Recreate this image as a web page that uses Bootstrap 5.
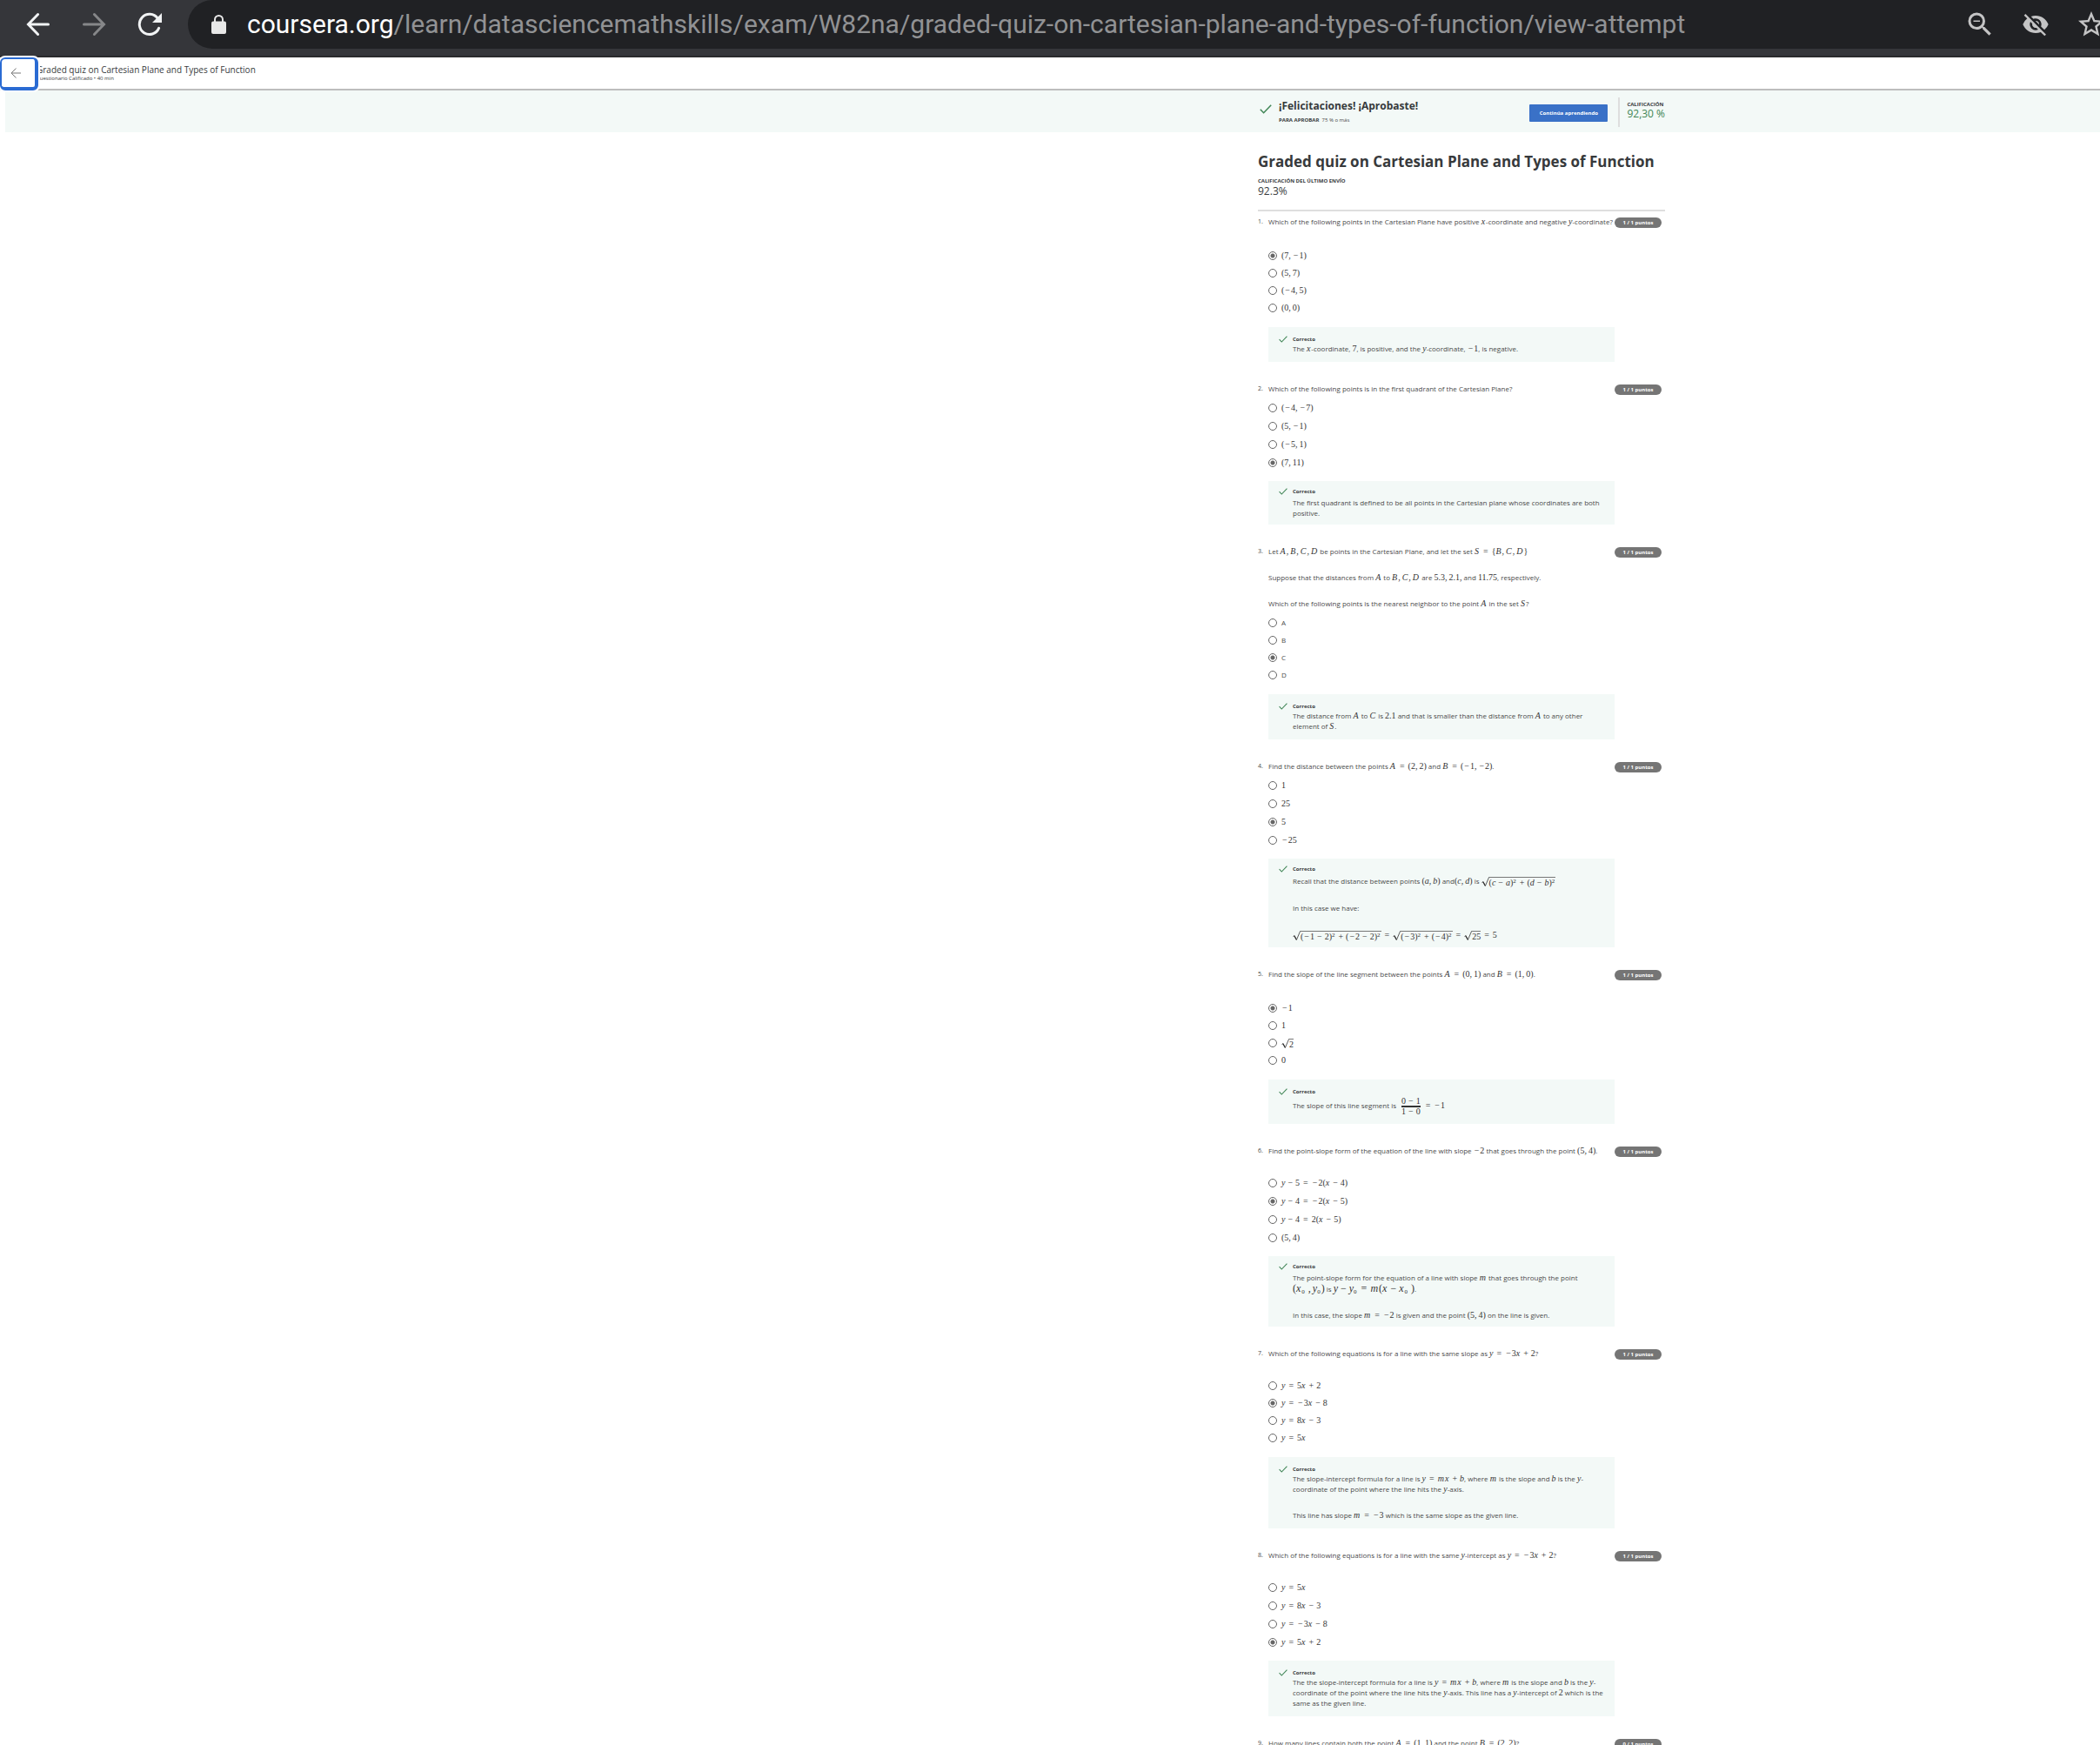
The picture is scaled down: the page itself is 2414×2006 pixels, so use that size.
<!DOCTYPE html>
<html lang="es">
<head>
<meta charset="utf-8">
<meta name="viewport" content="width=device-width, initial-scale=1">
<title>Graded quiz on Cartesian Plane and Types of Function</title>
<link href="https://cdn.jsdelivr.net/npm/bootstrap@5.3.0/dist/css/bootstrap.min.css" rel="stylesheet">
<style>
body{height:100vh;overflow:hidden;background:#fff;color:#4a4a4a;font:8px/12px "Open Sans",sans-serif}
p{margin:0}
p+p{margin-top:18px}
/* browser toolbar */
.toolbar{height:66px;background:#35363a;border-bottom:2px solid #292a2c;padding:0 0 8px 30px;gap:36px}
.toolbar button{width:28px;height:28px;color:#f1f3f4}
.toolbar button:disabled{color:#868789}
.toolbar button svg{display:block}
.omnibox{height:56px;margin-left:-6px;padding-left:27px;background:#202124;border-radius:28px 0 0 28px;color:#919294;font:30px/36px Roboto,sans-serif}
.omnibox .host{color:#fff}
.omnibox .lock{margin-right:24px}
.tools{gap:28px;margin-right:-8px;color:#c4c4c5}
.tools button{width:36px;height:36px;color:inherit}
/* page header */
.topbar{height:38px;padding:7px 0 0 42px;border-bottom:2px solid #bdbdbd;color:#373a3c}
.topbar h1{font-size:10px;line-height:14px;font-weight:400;margin:0}
.topbar small{font-size:6px;line-height:6px;display:block}
.back{left:0;top:0;width:44px;height:38px;background:#fff;border:solid #2a6bd3;border-width:2px 4px 4px 2px;border-radius:6px;box-shadow:0 0 0 2px #fff;color:#777;padding:0 0 0 10px;text-align:left}
.back svg{display:block}
.sheet{display:grid;grid-template-columns:72fr 468px 25fr;margin-left:6px}
.sheet>*{grid-column:2}
.tint{background:#f3f9f7}
.result{height:48px;padding:8px 0 0 2px;gap:8px}
.result h2{font-size:12px;line-height:16px;font-weight:700;color:#373a3c;margin:2px 0 3px}
.micro{font-size:6px;line-height:10px}
.micro b,.cap{font-weight:700;color:#373a3c}
.go{width:90px;height:20px;padding:0;border:0;border-radius:1px;background:#3a71c7;color:#fff;font-size:6px;line-height:20px;font-weight:700}
.score{height:34px;margin-left:4px;padding:3px 0 0 8px;border-left:2px solid #dedede}
.score strong{display:block;font-size:12px;line-height:12px;font-weight:400;color:#3f8555}
.quiz-title{font-size:17px;line-height:24px;font-weight:700;color:#373a3c;margin:22px 0 5px}
.grade{font-size:12px;line-height:14px;color:#373a3c}
.rule{height:2px;margin:14px 0 6px;background:#dedede}
/* questions */
.question{margin-bottom:25px}
.num{width:12px;font-size:7px}
.body-col{width:398px}
.puntos{width:54px;height:12px;margin-top:1px;border-radius:6px;background:#757575;color:#fff;font-size:6px;line-height:12px;font-weight:700;text-align:center}
.options{display:flex;flex-direction:column;gap:5px;margin:8px 0 13px}
.options.tight{gap:4px;margin-bottom:14px}
.options.mid{margin-top:23px}
.options.far{margin-top:25px}
.options .form-check{display:flex;align-items:center;height:16px;min-height:0;margin:0;padding:0;gap:5px}
.options .form-check-input{float:none;width:10px;height:10px;margin:0;border:1px solid #666;background:#fff none}
.options .form-check-input:checked{background:radial-gradient(circle,#666 0 2px,#fff 3px);border-color:#666}
.feedback{padding:9px 12px}
.feedback.snug{padding:7px 12px}
.feedback.snug .cap{margin-bottom:2px}
.feedback>svg{width:10px;height:8px;margin:1px 6px 0 0;flex:none}
.green{color:#3f8555}
.tall{line-height:14px}
.fracline{line-height:22px}
/* mathematics */
.tex{font-family:"Liberation Serif",serif;font-size:10px;line-height:1;white-space:nowrap;color:#333}
.tex i.wd{margin-right:1px}
.tex .rel{margin:0 4px}
.tex .bin{margin:0 3px}
.tex .neg{margin:0 1px}
.tex .pun{margin-right:2px}
.tex sup,.tex sub{font-size:7px;line-height:0;margin-right:1px}
.tex.big{font-size:12px}
.root{display:inline-flex;align-items:stretch;vertical-align:middle;height:11px}
.root svg{width:9px;height:11px;flex:none}
.root>.tex{border-top:1px solid #777;line-height:11px}
.frac{display:inline-flex;flex-direction:column;align-items:center;vertical-align:middle;margin:0 2px 0 4px;line-height:10px}
.frac .tex{line-height:10px}
.frac .tex+.tex{border-top:2px solid #333}
</style>
</head>
<body>
<svg class="d-none" aria-hidden="true">
  <symbol id="check" viewBox="0 0 14 11"><path d="M.8 5.8 4.6 9.7 13.2.8" fill="none" stroke="currentColor" stroke-width="1.5"/></symbol>
  <symbol id="surd" viewBox="0 0 9 11" preserveAspectRatio="none"><path d="M.5 6.6 2 5.6 4.4 10.4 8.6.5H9" fill="none" stroke="#333" stroke-width=".8"/><path d="M1.8 5.8 4.3 10.2" stroke="#333" stroke-width="1.2"/></symbol>
</svg>

<nav class="toolbar d-flex align-items-center" aria-label="Navegador">
  <button type="button" class="btn p-0 border-0" aria-label="Atrás"><svg width="28" height="28" viewBox="0 0 28 28" fill="none" stroke="currentColor" stroke-width="3" stroke-linecap="round"><path d="M25.5 14H3M13.6 2.5 2.5 14l11.1 11.5"/></svg></button>
  <button type="button" class="btn p-0 border-0 opacity-100" disabled aria-label="Adelante"><svg width="28" height="28" viewBox="0 0 28 28" fill="none" stroke="currentColor" stroke-width="3" stroke-linecap="round"><path d="M2.5 14H25M14.4 2.5 25.5 14 14.4 25.5"/></svg></button>
  <button type="button" class="btn p-0 border-0" aria-label="Recargar"><svg width="28" height="28" viewBox="0 0 28 28"><path d="M23.2 7A11.6 11.6 0 1 0 24.6 18.4" fill="none" stroke="currentColor" stroke-width="3" stroke-linecap="round"/><path d="M28 1v11H17z" fill="currentColor"/></svg></button>
  <div class="omnibox d-flex align-items-center flex-grow-1">
    <svg class="lock" width="17" height="22" viewBox="0 0 17 22"><rect y="7.5" width="17" height="14.5" rx="2" fill="#e8e8e8"/><path d="M4 9V5.5a4.5 4.5 0 0 1 9 0V9" fill="none" stroke="#e8e8e8" stroke-width="2"/></svg>
    <div class="text-nowrap"><span class="host">coursera.org</span>/learn/datasciencemathskills/exam/W82na/graded-quiz-on-cartesian-plane-and-types-of-function/view-attempt</div>
    <div class="tools d-flex ms-auto">
      <button type="button" class="btn p-0 border-0" aria-label="Reducir"><svg width="36" height="36" viewBox="0 0 24 24" fill="currentColor" class="d-block"><path d="M15.5 14h-.79l-.28-.27A6.47 6.47 0 0 0 16 9.5 6.5 6.5 0 1 0 9.5 16c1.61 0 3.09-.59 4.23-1.57l.27.28v.79l5 4.99L20.49 19l-4.99-5zm-6 0a4.5 4.5 0 1 1 0-9 4.5 4.5 0 0 1 0 9zM7 9h5v1H7z"/></svg></button>
      <button type="button" class="btn p-0 border-0" aria-label="Cookies bloqueadas"><svg width="32" height="36" viewBox="0 0 24 24" fill="currentColor" class="d-block mx-auto"><path d="M12 7a5 5 0 0 1 4.64 6.83l2.92 2.92A11.8 11.8 0 0 0 23 12c-1.73-4.39-6-7.5-11-7.5-1.4 0-2.74.25-3.98.7l2.16 2.16C10.74 7.13 11.35 7 12 7zM2 4.27l2.74 2.74A11.8 11.8 0 0 0 1 12c1.73 4.39 6 7.5 11 7.5 1.55 0 3.03-.3 4.38-.84L19.73 22 21 20.73 3.27 3 2 4.27zM7.53 9.8l1.55 1.55A3 3 0 0 0 12.65 14.92l1.55 1.55A5 5 0 0 1 7.53 9.8zm4.31-.78 3.15 3.15.02-.16a3 3 0 0 0-3-3l-.17.01z"/></svg></button>
      <button type="button" class="btn p-0 border-0" aria-label="Favoritos"><svg width="36" height="36" viewBox="0 0 24 24" fill="currentColor" class="d-block"><path d="m22 9.24-7.19-.62L12 2 9.19 8.63 2 9.24l5.46 4.73L5.82 21 12 17.27 18.18 21l-1.63-7.03L22 9.24zM12 15.4l-3.76 2.27 1-4.28-3.32-2.88 4.38-.38L12 6.1l1.71 4.04 4.38.38-3.32 2.88 1 4.28L12 15.4z"/></svg></button>
    </div>
  </div>
</nav>

<header class="topbar position-relative">
  <button type="button" class="back position-absolute" aria-label="Volver"><svg width="12" height="12" viewBox="0 0 12 12" fill="none" stroke="currentColor"><path d="M12 6H1M6.5.5 1 6l5.5 5.5"/></svg></button>
  <h1>Graded quiz on Cartesian Plane and Types of Function</h1>
  <small>Cuestionario Calificado • 40 min</small>
</header>

<section class="sheet tint">
  <div class="result d-flex align-items-start">
    <svg class="green mt-2" width="14" height="11"><use href="#check"/></svg>
    <div class="flex-grow-1">
      <h2>¡Felicitaciones! ¡Aprobaste!</h2>
      <div class="micro"><b>PARA APROBAR</b>&nbsp; 75 % o más</div>
    </div>
    <button type="button" class="go mt-2">Continúa aprendiendo</button>
    <div class="score"><div class="micro cap">CALIFICACIÓN</div><strong>92,30 %</strong></div>
  </div>
</section>

<main class="sheet">
<div>
  <h2 class="quiz-title">Graded quiz on Cartesian Plane and Types of Function</h2>
  <div class="micro cap">CALIFICACIÓN DEL ÚLTIMO ENVÍO</div>
  <div class="grade">92.3%</div>
  <div class="rule"></div>

  <section class="question d-flex align-items-start"><div class="num">1.</div>
    <div class="body-col"><p class="text-nowrap">Which of the following points in the Cartesian Plane have positive <span class="tex">x</span>-coordinate and negative <span class="tex">y</span>-coordinate?</p>
      <div class="options tight far" data-pick="1"><span class="tex">(7,-1)</span><span class="tex">(5,7)</span><span class="tex">(-4,5)</span><span class="tex">(0,0)</span></div>
      <div class="feedback tint d-flex"><svg class="green"><use href="#check"/></svg><div><div class="micro cap">Correcto</div>
        <p>The <span class="tex">x</span>-coordinate, <span class="tex">7</span>, is positive, and the <span class="tex">y</span>-coordinate, <span class="tex">-1</span>, is negative.</p></div></div>
    </div><div class="puntos">1 / 1 puntos</div></section>

  <section class="question d-flex align-items-start"><div class="num">2.</div>
    <div class="body-col"><p>Which of the following points is in the first quadrant of the Cartesian Plane?</p>
      <div class="options" data-pick="4"><span class="tex">(-4,-7)</span><span class="tex">(5,-1)</span><span class="tex">(-5,1)</span><span class="tex">(7,11)</span></div>
      <div class="feedback snug tint d-flex"><svg class="green"><use href="#check"/></svg><div><div class="micro cap">Correcto</div>
        <p>The first quadrant is defined to be all points in the Cartesian plane whose coordinates are both positive.</p></div></div>
    </div><div class="puntos">1 / 1 puntos</div></section>

  <section class="question d-flex align-items-start"><div class="num">3.</div>
    <div class="body-col"><p>Let <span class="tex">A,B,C,D</span> be points in the Cartesian Plane, and let the set <span class="tex">S={B,C,D}</span></p>
      <p>Suppose that the distances from <span class="tex">A</span> to <span class="tex">B,C,D</span> are <span class="tex">5.3,2.1,</span> and <span class="tex">11.75</span>, respectively.</p>
      <p>Which of the following points is the nearest neighbor to the point <span class="tex">A</span> in the set <span class="tex">S</span>?</p>
      <div class="options tight" data-pick="3"><span>A</span><span>B</span><span>C</span><span>D</span></div>
      <div class="feedback tint d-flex"><svg class="green"><use href="#check"/></svg><div><div class="micro cap">Correcto</div>
        <p>The distance from <span class="tex">A</span> to <span class="tex">C</span> is <span class="tex">2.1</span> and that is smaller than the distance from <span class="tex">A</span> to any other element of <span class="tex">S</span>.</p></div></div>
    </div><div class="puntos">1 / 1 puntos</div></section>

  <section class="question d-flex align-items-start"><div class="num">4.</div>
    <div class="body-col"><p>Find the distance between the points <span class="tex">A=(2,2)</span> and <span class="tex">B=(-1,-2)</span>.</p>
      <div class="options" data-pick="3"><span class="tex">1</span><span class="tex">25</span><span class="tex">5</span><span class="tex">-25</span></div>
      <div class="feedback snug tint d-flex"><svg class="green"><use href="#check"/></svg><div><div class="micro cap">Correcto</div>
        <p class="tall">Recall that the distance between points <span class="tex">(a,b)</span> and<span class="tex">(c,d)</span> is <span class="root"><svg><use href="#surd"/></svg><span class="tex">(c-a)^2+(d-b)^2</span></span></p>
        <p>In this case we have:</p>
        <p class="tall"><span class="root"><svg><use href="#surd"/></svg><span class="tex">(-1-2)^2+(-2-2)^2</span></span><span class="tex">=</span><span class="root"><svg><use href="#surd"/></svg><span class="tex">(-3)^2+(-4)^2</span></span><span class="tex">=</span><span class="root"><svg><use href="#surd"/></svg><span class="tex">25</span></span><span class="tex">=5</span></p></div></div>
    </div><div class="puntos">1 / 1 puntos</div></section>

  <section class="question d-flex align-items-start"><div class="num">5.</div>
    <div class="body-col"><p>Find the slope of the line segment between the points <span class="tex">A=(0,1)</span> and <span class="tex">B=(1,0)</span>.</p>
      <div class="options tight far" data-pick="1"><span class="tex">-1</span><span class="tex">1</span><span class="root"><svg><use href="#surd"/></svg><span class="tex">2</span></span><span class="tex">0</span></div>
      <div class="feedback tint d-flex"><svg class="green"><use href="#check"/></svg><div><div class="micro cap">Correcto</div>
        <p class="fracline">The slope of this line segment is <span class="frac"><span class="tex">0-1</span><span class="tex">1-0</span></span><span class="tex">=-1</span></p></div></div>
    </div><div class="puntos">1 / 1 puntos</div></section>

  <section class="question d-flex align-items-start"><div class="num">6.</div>
    <div class="body-col"><p>Find the point-slope form of the equation of the line with slope <span class="tex">-2</span> that goes through the point <span class="tex">(5,4)</span>.</p>
      <div class="options mid" data-pick="2"><span class="tex">y-5=-2(x-4)</span><span class="tex">y-4=-2(x-5)</span><span class="tex">y-4=2(x-5)</span><span class="tex">(5,4)</span></div>
      <div class="feedback snug tint d-flex"><svg class="green"><use href="#check"/></svg><div><div class="micro cap">Correcto</div>
        <p>The point-slope form for the equation of a line with slope <span class="tex">m</span> that goes through the point <span class="tex big">(x_0 ,y_0)</span> is <span class="tex big">y-y_0=m(x-x_0 )</span>.</p>
        <p>In this case, the slope <span class="tex">m=-2</span> is given and the point <span class="tex">(5,4)</span> on the line is given.</p></div></div>
    </div><div class="puntos">1 / 1 puntos</div></section>

  <section class="question d-flex align-items-start"><div class="num">7.</div>
    <div class="body-col"><p>Which of the following equations is for a line with the same slope as <span class="tex">y=-3x+2</span>?</p>
      <div class="options tight mid" data-pick="2"><span class="tex">y=5x+2</span><span class="tex">y=-3x-8</span><span class="tex">y=8x-3</span><span class="tex">y=5x</span></div>
      <div class="feedback tint d-flex"><svg class="green"><use href="#check"/></svg><div><div class="micro cap">Correcto</div>
        <p>The slope-intercept formula for a line is <span class="tex">y=mx+b</span>, where <span class="tex">m</span> is the slope and <span class="tex">b</span> is the <span class="tex">y</span>-<wbr>coordinate of the point where the line hits the <span class="tex">y</span>-axis.</p>
        <p>This line has slope <span class="tex">m=-3</span> which is the same slope as the given line.</p></div></div>
    </div><div class="puntos">1 / 1 puntos</div></section>

  <section class="question d-flex align-items-start"><div class="num">8.</div>
    <div class="body-col"><p>Which of the following equations is for a line with the same <span class="tex">y</span>-intercept as <span class="tex">y=-3x+2</span>?</p>
      <div class="options mid" data-pick="4"><span class="tex">y=5x</span><span class="tex">y=8x-3</span><span class="tex">y=-3x-8</span><span class="tex">y=5x+2</span></div>
      <div class="feedback tint d-flex"><svg class="green"><use href="#check"/></svg><div><div class="micro cap">Correcto</div>
        <p>The the slope-intercept formula for a line is <span class="tex">y=mx+b</span>, where <span class="tex">m</span> is the slope and <span class="tex">b</span> is the <span class="tex">y</span>-<wbr>coordinate of the point where the line hits the <span class="tex">y</span>-axis. This line has a <span class="tex">y</span>-intercept of <span class="tex">2</span> which is the same as the given line.</p></div></div>
    </div><div class="puntos">1 / 1 puntos</div></section>

  <section class="question d-flex align-items-start"><div class="num">9.</div>
    <div class="body-col"><p>How many lines contain both the point <span class="tex">A=(1,1)</span> and the point <span class="tex">B=(2,2)</span>?</p></div>
    <div class="puntos">0 / 1 puntos</div></section>
</div>
</main>

<script src="https://cdn.jsdelivr.net/npm/bootstrap@5.3.0/dist/js/bootstrap.bundle.min.js"></script>
<script>
// Typeset each formula: italic variables, spaced operators, sub- and superscripts.
document.querySelectorAll('.tex').forEach(el => {
  const s = el.textContent;
  let out = '', prev = '';
  for (let i = 0; i < s.length; i++) {
    const c = s[i];
    if (/[A-Za-z]/.test(c)) out += /[A-Zmx]/.test(c) ? `<i class="wd">${c}</i>` : `<i>${c}</i>`;
    else if (c === '-') out += `<span class="${prev === '' || '(,='.includes(prev) ? 'neg' : 'bin'}">−</span>`;
    else if (c === '+') out += '<span class="bin">+</span>';
    else if (c === '=') out += '<span class="rel">=</span>';
    else if (c === ',' && i < s.length - 1) out += '<span class="pun">,</span>';
    else if (c === '^') out += `<sup>${s[++i]}</sup>`;
    else if (c === '_') out += `<sub>${s[++i]}</sub>`;
    else out += c;
    prev = c;
  }
  el.innerHTML = out;
});
// Turn each list of answers into radio buttons with labels.
document.querySelectorAll('.options').forEach((group, q) => {
  [...group.children].forEach((answer, n) => {
    const row = document.createElement('div');
    row.className = 'form-check';
    const id = `q${q + 1}-${n + 1}`;
    row.innerHTML = `<input class="form-check-input" type="radio" name="q${q + 1}" id="${id}"${n + 1 === +group.dataset.pick ? ' checked' : ''}><label class="form-check-label d-flex" for="${id}"></label>`;
    group.replaceChild(row, answer);
    row.lastChild.append(answer);
  });
});
</script>
</body>
</html>
